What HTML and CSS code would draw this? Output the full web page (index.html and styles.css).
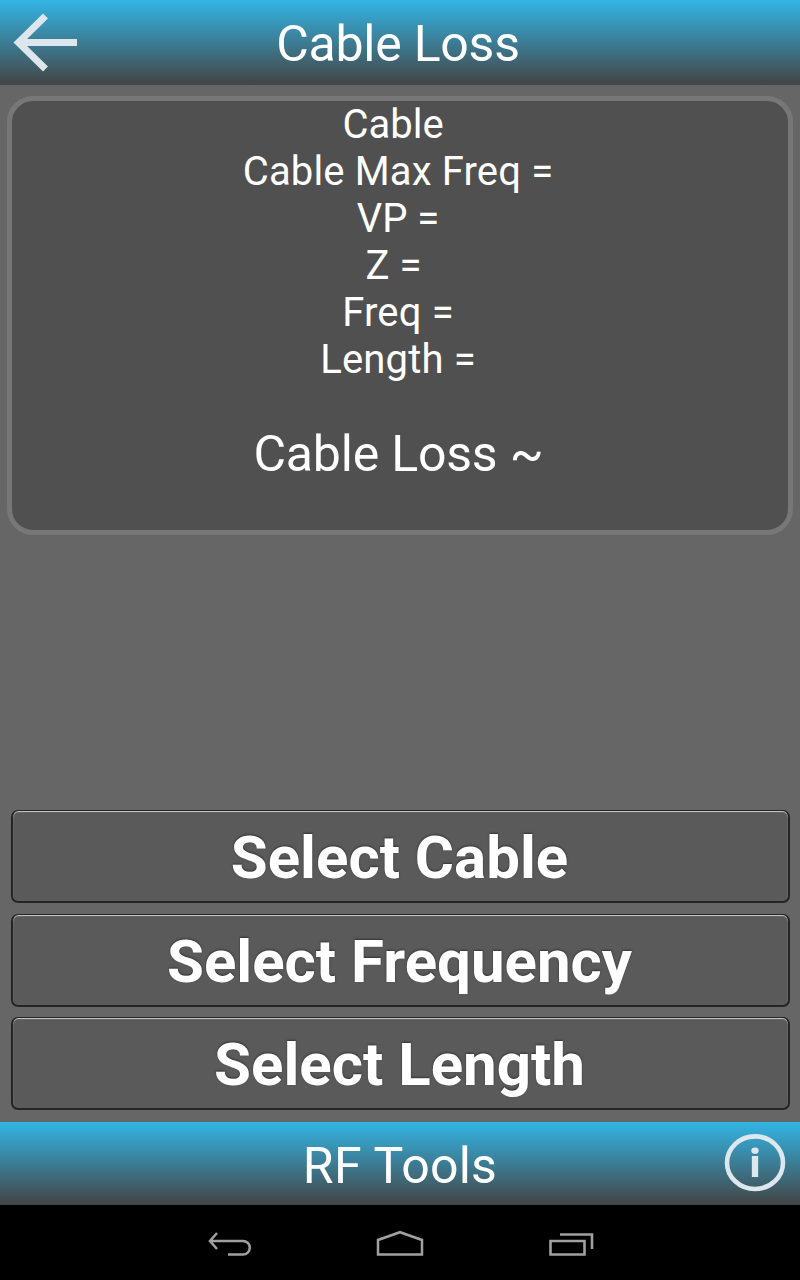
FILE: index.html
```
<!DOCTYPE html>
<html lang="en">
<head>
<meta charset="utf-8">
<title>Cable Loss</title>
<link rel="stylesheet" href="styles.css">
</head>
<body>
<div class="app">
  <header class="bar bar-top">
    <svg class="back" width="70" height="64" viewBox="0 0 70 64" aria-label="Back"><path d="M37.500 6 10.500 32.500 37.500 59M14 32.500H69" fill="none" stroke="#dce6ec" stroke-width="7"/></svg>
    <h1 class="title">Cable Loss</h1>
  </header>
  <main class="content">
    <section class="panel">
      <p class="line">Cable&nbsp;</p>
      <p class="line line-wide">Cable Max Freq =</p>
      <p class="line">VP =</p>
      <p class="line line-z">Z =&nbsp;</p>
      <p class="line line-wide">Freq =</p>
      <p class="line line-wide">Length =</p>
      <p class="result">Cable Loss ~</p>
    </section>
    <div class="actions">
      <button class="btn">Select Cable</button>
      <button class="btn">Select Frequency</button>
      <button class="btn">Select Length</button>
    </div>
  </main>
  <footer class="bar bar-bottom">
    <h2 class="title">RF Tools</h2>
    <svg class="info" width="64" height="60" viewBox="0 0 64 60" aria-label="Info"><g fill="none" stroke="#dce8ee"><ellipse cx="32" cy="29.700" rx="28" ry="26.300" stroke-width="4.600"/><path d="M32 23V44" stroke-width="6.300"/></g><ellipse cx="32" cy="17.700" rx="3.700" ry="3.100" fill="#dce8ee"/></svg>
  </footer>
  <nav class="system">
    <svg class="nav-back" width="46" height="26" viewBox="0 0 46 26"><path d="M10 1 3 9 10 17M3.500 9H36a6.750 6.750 0 0 1 0 13.500H21" fill="none" stroke="#a0a0a0" stroke-width="2.500"/></svg>
    <svg class="nav-home" width="50" height="28" viewBox="0 0 50 28"><path d="M3 25.500V11L25 3.200 47 11V25.500Z" fill="none" stroke="#a0a0a0" stroke-width="2.500"/></svg>
    <svg class="nav-recent" width="46" height="26" viewBox="0 0 46 26"><path d="M2.500 10H36.500V23.500H2.500ZM12 3.500H44V18" fill="none" stroke="#a0a0a0" stroke-width="2.600"/></svg>
  </nav>
</div>
</body>
</html>
```
FILE: styles.css
```
* { box-sizing: border-box; }
body { margin: 0; font-family: Roboto, sans-serif; color: #fff; background: #000; }
h1, h2, p { margin: 0; font-weight: 400; }
svg { display: block; }
.app { width: 800px; height: 1280px; display: flex; flex-direction: column; background: #666; overflow: hidden; }
.bar { position: relative; flex: none; background: linear-gradient(#33b5e5, #444); }
.bar-top { height: 85px; padding-top: 15px; }
.bar-bottom { height: 83px; padding-top: 15px; }
.title { height: 58px; font-size: 50px; line-height: 58px; text-align: center; white-space: nowrap; }
.bar-top .title { padding-right: 4px; letter-spacing: -0.25px; }
.bar-bottom .title { letter-spacing: 0.25px; }
.back { position: absolute; left: 8px; top: 10px; }
.info { position: absolute; left: 723px; top: 11px; }
.content { flex: 1; min-height: 0; padding: 11px 7px 12px; display: flex; flex-direction: column; justify-content: space-between; }
.panel { height: 439px; border: 5px solid #777; border-radius: 26px; background: #505050; text-align: center; padding-right: 4px; }
.line { font-size: 40px; line-height: 47px; height: 47px; white-space: pre; }
.line-wide { letter-spacing: 0.15px; }
.line-z { padding-left: 1px; }
.result { margin-top: 42px; padding-left: 1px; font-size: 50px; line-height: 59px; letter-spacing: -0.2px; white-space: nowrap; }
.actions { display: flex; flex-direction: column; gap: 10.5px; padding: 0 3px 0 4px; }
.btn { height: 93px; margin: 0; padding: 3px 2px 0 0; border: 2px solid #252525; border-top: 1px solid #252525; border-radius: 7px; background: #5a5a5a; box-shadow: inset 0 1px 1px #ccc; color: #fff; font: 700 60px/87px Roboto, sans-serif; text-shadow: 0 -1px 2px #333; white-space: nowrap; }
.system { height: 75px; flex: none; background: #000; display: flex; align-items: flex-start; padding: 20px 0 0 207px; }
.nav-back { margin-top: 7px; }
.nav-home { margin: 4px 0 0 122px; }
.nav-recent { margin: 6px 0 0 123px; }
```
